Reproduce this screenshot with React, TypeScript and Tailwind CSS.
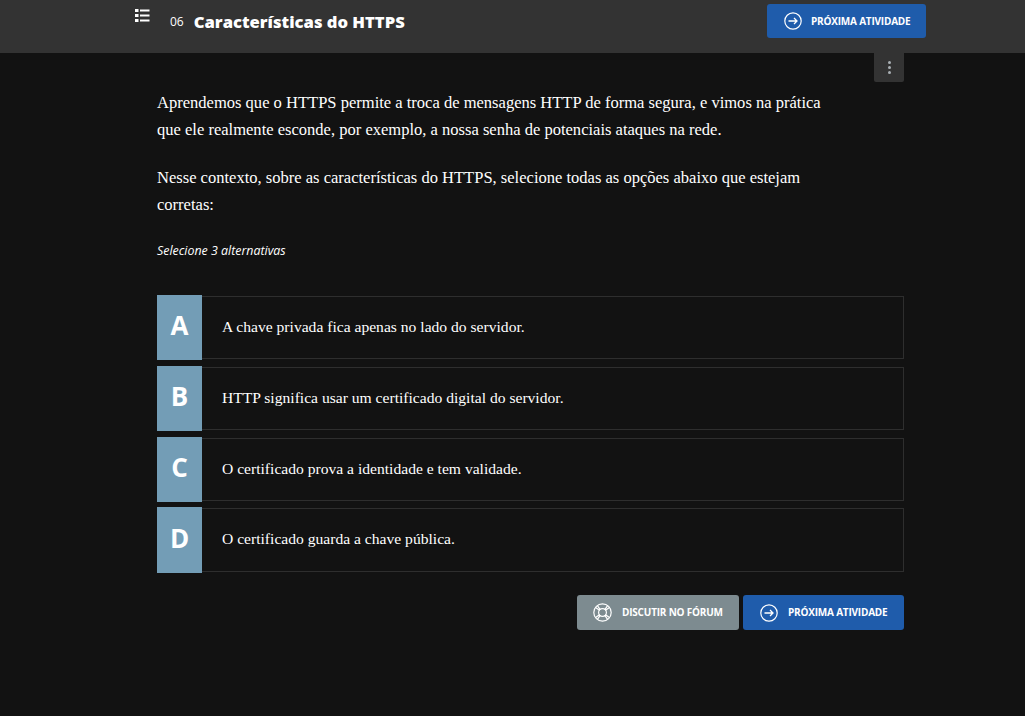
import React from 'react';

const alternatives = [
  { letter: "A", text: "A chave privada fica apenas no lado do servidor.", rowClass: "h-[63px]" },
  { letter: "B", text: "HTTP significa usar um certificado digital do servidor.", rowClass: "h-[63px]" },
  { letter: "C", text: "O certificado prova a identidade e tem validade.", rowClass: "h-[63px]" },
  { letter: "D", text: "O certificado guarda a chave pública.", rowClass: "h-[64px] -mt-px" },
];

const ArrowCircle = () => (
  <svg width="18" height="18" viewBox="0 0 18 18" fill="none" stroke="white" className="shrink-0">
    <circle cx="9" cy="9" r="8.2" strokeWidth="1.2" />
    <path d="M4.5 9h8.5M10 6l3 3-3 3" strokeWidth="1.3" />
  </svg>
);

const LifeRing = () => (
  <svg width="19" height="19" viewBox="0 0 19 19" fill="none" stroke="white" strokeWidth="1.2" className="shrink-0 -ml-[1px]">
    <circle cx="9.5" cy="9.5" r="8.7" />
    <circle cx="9.5" cy="9.5" r="3.9" />
    <path d="M2.6 4.4l4.2 3M4.4 2.6l3 4.2M14.6 2.6l-3 4.2M16.4 4.4l-4.2 3M2.6 14.6l4.2-3M4.4 16.4l3-4.2M14.6 16.4l-3-4.2M16.4 14.6l-4.2-3" />
  </svg>
);

const App: React.FC = () => {
  return (
    <div className="bg-[#121212] min-h-[716px] text-white font-['Liberation_Serif',serif] overflow-hidden">
      {/* Topo */}
      <header className="h-[53px] bg-[#333333] pl-[135px]">
        <div className="w-[791px] flex items-start justify-between">
          <div className="flex items-start font-['Open_Sans',sans-serif]">
            <svg width="15" height="14" viewBox="0 0 15 14" fill="white" className="mt-[9px]">
              <rect x="0" y="0" width="3.5" height="3" />
              <rect x="0" y="5" width="3.5" height="3" />
              <rect x="0" y="10" width="3.5" height="3" />
              <rect x="5" y="0.5" width="9.5" height="2" />
              <rect x="5" y="5.5" width="9.5" height="2" />
              <rect x="5" y="10.5" width="9.5" height="2" />
            </svg>
            <span className="ml-[20px] mt-[14px] text-[12px] leading-4">06</span>
            <h1 className="ml-[10px] mt-[10px] text-[16.6px] leading-6 font-extrabold">Características do HTTPS</h1>
          </div>
          <a className="mt-[4px] w-[159px] h-[34px] rounded-[3px] bg-[#1f5cab] flex items-center pl-[17px] gap-[9px] font-['Open_Sans',sans-serif] text-[10px] tracking-[-0.2px] font-bold">
            <ArrowCircle />
            PRÓXIMA ATIVIDADE
          </a>
        </div>
      </header>

      <main className="w-[747px] ml-[157px]">
        <div className="flex justify-end">
          <button className="w-[30px] h-[29px] bg-[#333333] rounded-b-[2px] flex flex-col items-center justify-center gap-[2px]">
            <span className="w-[3px] h-[3px] rounded-full bg-[#aab0b5]"></span>
            <span className="w-[3px] h-[3px] rounded-full bg-[#aab0b5]"></span>
            <span className="w-[3px] h-[3px] rounded-full bg-[#aab0b5]"></span>
          </button>
        </div>

        {/* Enunciado */}
        <div className="w-[680px] mt-[7px] text-[16.55px] leading-[27px]">
          <p>Aprendemos que o HTTPS permite a troca de mensagens HTTP de forma segura, e vimos na prática<br />que ele realmente esconde, por exemplo, a nossa senha de potenciais ataques na rede.</p>
          <p className="mt-[21px]">Nesse contexto, sobre as características do HTTPS, selecione todas as opções abaixo que estejam corretas:</p>
        </div>
        <p className="mt-[25px] text-[12.4px] leading-4 italic font-['Open_Sans',sans-serif]">Selecione 3 alternativas</p>

        {/* Alternativas */}
        <div className="mt-[37px] flex flex-col gap-[8px]">
          {alternatives.map((alt) => (
            <div key={alt.letter} className={`flex ${alt.rowClass} border border-[#2e2e2e] border-l-0`}>
              <div className="w-[45px] -my-[2px] pb-[4px] bg-[#739db6] flex items-center justify-center font-['Open_Sans',sans-serif] font-bold text-[26px]">
                {alt.letter}
              </div>
              <div className="flex-1 flex items-center pl-[20px] pb-[2px] text-[15.6px]">{alt.text}</div>
            </div>
          ))}
        </div>

        {/* Ações */}
        <div className="mt-[23px] flex justify-end gap-[4px] font-['Open_Sans',sans-serif] text-[10px] tracking-[-0.2px] font-bold">
          <a className="w-[162px] h-[35px] rounded-[3px] bg-[#7d8b90] flex items-center pl-[17px] gap-[10px]">
            <LifeRing />
            DISCUTIR NO FÓRUM
          </a>
          <a className="w-[161px] h-[35px] rounded-[3px] bg-[#1f5cab] flex items-center pl-[17px] gap-[10px]">
            <ArrowCircle />
            PRÓXIMA ATIVIDADE
          </a>
        </div>
      </main>
    </div>
  );
};

export default App;
